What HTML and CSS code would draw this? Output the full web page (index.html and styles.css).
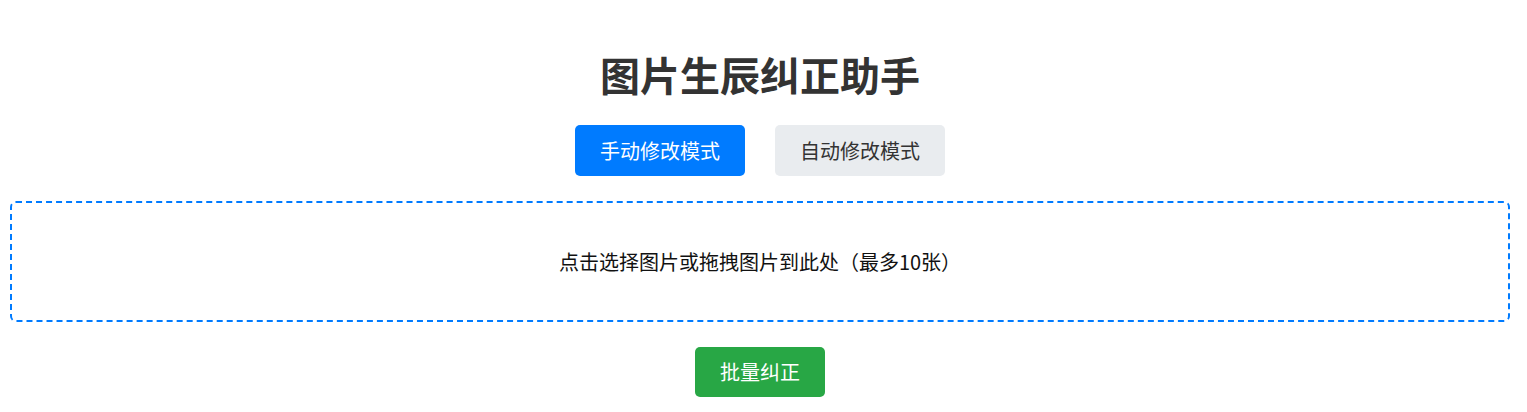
FILE: index.html
```html
<!DOCTYPE html>
<html lang="zh-CN">
<head>
<meta charset="utf-8">
<title>图片生辰纠正助手</title>
<link rel="stylesheet" href="styles.css">
</head>
<body>
<div class="container">
  <h1 class="title">图片生辰纠正助手</h1>
  <div class="modes">
    <button class="btn btn-primary">手动修改模式</button>
    <button class="btn btn-light">自动修改模式</button>
  </div>
  <div class="dropzone">点击选择图片或拖拽图片到此处（最多10张）</div>
  <div class="actions">
    <button class="btn btn-success">批量纠正</button>
  </div>
</div>
</body>
</html>
```

FILE: styles.css
```css
html, body {
  margin: 0;
  padding: 0;
  background: #fff;
}
body {
  font-family: "Noto Sans CJK SC", "Noto Sans", sans-serif;
  color: #222;
}
.container {
  width: 1500px;
  margin: 0 10px;
}
.title {
  margin: 50px 0 27px;
  font-size: 40px;
  line-height: 48px;
  font-weight: 700;
  color: #333;
  text-align: center;
}
.modes {
  display: flex;
  justify-content: center;
  gap: 30px;
}
.btn {
  font-family: inherit;
  font-size: 20px;
  line-height: 27px;
  padding: 12px 25px;
  border: none;
  border-radius: 5px;
  cursor: pointer;
}
.btn-primary {
  background: #007bff;
  color: #fff;
}
.btn-light {
  background: #e9ecef;
  color: #333;
}
.btn-success {
  background: #28a745;
  color: #fff;
  padding: 11px 25px 12px;
}
.dropzone {
  margin-top: 25px;
  height: 117px;
  border: 2px dashed #007bff;
  border-radius: 6px;
  display: flex;
  align-items: center;
  justify-content: center;
  font-size: 20px;
  color: #111;
}
.actions {
  margin-top: 25px;
  display: flex;
  justify-content: center;
}
```
